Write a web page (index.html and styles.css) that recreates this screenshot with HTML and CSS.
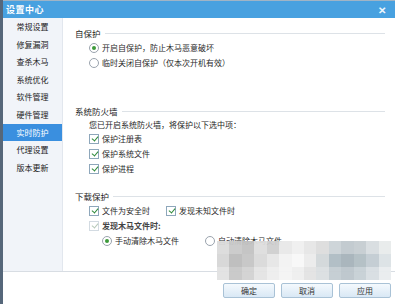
FILE: index.html
```html
<!DOCTYPE html>
<html lang="zh-CN">
<head>
    <meta charset="UTF-8">
    <title>设置中心</title>
    <link rel="stylesheet" href="styles.css">
</head>
<body>
    <div class="window">
        <div class="titlebar">
            <span class="title">设置中心</span>
            <span class="close">✕</span>
        </div>

        <div class="body">
            <ul class="sidebar">
                <li>常规设置</li>
                <li>修复漏洞</li>
                <li>查杀木马</li>
                <li>系统优化</li>
                <li>软件管理</li>
                <li>硬件管理</li>
                <li class="active">实时防护</li>
                <li>代理设置</li>
                <li>版本更新</li>
            </ul>

            <div class="content">
                <div class="group">
                    <div class="group-title"><span>自保护</span></div>
                    <label class="opt"><span class="radio on"></span>开启自保护，防止木马恶意破坏</label>
                    <label class="opt"><span class="radio"></span>临时关闭自保护（仅本次开机有效）</label>
                </div>

                <div class="group firewall">
                    <div class="group-title"><span>系统防火墙</span></div>
                    <p class="note">您已开启系统防火墙，将保护以下选中项：</p>
                    <label class="opt"><span class="check on"></span>保护注册表</label>
                    <label class="opt"><span class="check on"></span>保护系统文件</label>
                    <label class="opt"><span class="check on"></span>保护进程</label>
                </div>

                <div class="group download">
                    <div class="group-title"><span>下载保护</span></div>
                    <div class="row">
                        <label class="opt w77"><span class="check on"></span>文件为安全时</label>
                        <label class="opt"><span class="check on"></span>发现未知文件时</label>
                    </div>
                    <label class="opt"><span class="check off"></span><b class="sub">发现木马文件时:</b></label>
                    <div class="row indent">
                        <label class="opt w103"><span class="radio on"></span>手动清除木马文件</label>
                        <label class="opt"><span class="radio"></span>自动清除木马文件</label>
                    </div>
                </div>
            </div>
        </div>

        <div class="footer">
            <button class="btn">确定</button>
            <button class="btn">取消</button>
            <button class="btn">应用</button>
        </div>

        <div class="mosaic">
            <i style="background:#dcdcdc"></i><i style="background:#cacaca"></i><i style="background:#c2c2c2"></i><i style="background:#dedede"></i><i style="background:#cfcfcf"></i><i style="background:#e8e8e8"></i><i style="background:#f0f0f0"></i><i style="background:#e6e6e6"></i><i style="background:#dddddd"></i><i style="background:#ccd3d7"></i><i style="background:#c0c9ce"></i><i style="background:#c6cdd1"></i><i style="background:#d8dde0"></i><i style="background:#e8ebec"></i>
            <i style="background:#d6d6d6"></i><i style="background:#bcbcbc"></i><i style="background:#c6c6c6"></i><i style="background:#dadada"></i><i style="background:#e6e6e6"></i><i style="background:#f3f3f3"></i><i style="background:#f8f8f8"></i><i style="background:#ebebeb"></i><i style="background:#d2d7da"></i><i style="background:#aebcc4"></i><i style="background:#a6b3ba"></i><i style="background:#b2bec4"></i><i style="background:#c2ccd2"></i><i style="background:#dce2e5"></i>
            <i style="background:#e2e2e2"></i><i style="background:#c8c8c8"></i><i style="background:#d2d2d2"></i><i style="background:#e4e4e4"></i><i style="background:#eeeeee"></i><i style="background:#f4f4f4"></i><i style="background:#efefef"></i><i style="background:#e3e3e3"></i><i style="background:#dbdfe1"></i><i style="background:#c4cdd2"></i><i style="background:#bcc6cc"></i><i style="background:#c7d0d5"></i><i style="background:#d7dee2"></i><i style="background:#e9edef"></i>
        </div>
    </div>
</body>
</html>
```

FILE: styles.css
```css
* {
    margin: 0;
    padding: 0;
    box-sizing: border-box;
}

body {
    width: 395px;
    height: 304px;
    overflow: hidden;
    font-family: "Noto Sans CJK SC", "Liberation Sans", sans-serif;
    font-size: 8px;
    color: #2a2a2a;
    background: #ffffff;
}

.window {
    position: relative;
    height: 304px;
    border-left: 3px solid #56677a;
    display: flex;
    flex-direction: column;
}

.titlebar {
    height: 18px;
    background: #48a1e0;
    border-top: 1px solid #9fb4c6;
    display: flex;
    align-items: center;
    justify-content: space-between;
    padding: 0 9px 0 3px;
    color: #ffffff;
}

.title {
    font-size: 9px;
    font-weight: bold;
    letter-spacing: 0.5px;
}

.close {
    font-size: 10px;
    font-weight: bold;
    color: #eef6fc;
}

.body {
    flex: 1;
    display: flex;
    border-bottom: 1px solid #d8dde3;
}

.sidebar {
    width: 60px;
    list-style: none;
    background: #f1f4f9;
    border-right: 1px solid #e2e7ee;
}

.sidebar li {
    height: 17.6px;
    line-height: 17.6px;
    text-align: center;
    font-size: 8px;
    color: #222222;
}

.sidebar li.active {
    background: #3a8fdf;
    color: #ffffff;
}

.content {
    flex: 1;
    padding: 10px 10px 0 12px;
}

.group-title {
    display: flex;
    align-items: center;
    gap: 4px;
    height: 10px;
    line-height: 10px;
    margin-bottom: 2px;
    font-size: 8.5px;
    color: #1e1e1e;
}

.group-title::after {
    content: "";
    flex: 1;
    border-top: 1px solid #dde2e7;
}

.firewall .group-title {
    margin-bottom: 4px;
}

.opt {
    display: flex;
    align-items: center;
    height: 15px;
    padding-left: 14px;
    font-size: 8px;
    color: #2a2a2a;
}

.firewall {
    margin-top: 36px;
}

.download {
    margin-top: 15px;
}

.note {
    height: 10px;
    line-height: 10px;
    margin-bottom: 1px;
    padding-left: 14px;
    font-size: 8px;
    color: #1e1e1e;
}

.row {
    display: flex;
}

.w77 {
    width: 77px;
}

.w103 {
    width: 103px;
}

.indent {
    padding-left: 13px;
}

.indent .opt {
    padding-left: 14px;
}

.sub {
    font-weight: bold;
    color: #444444;
}

.radio {
    width: 10px;
    height: 10px;
    border: 1px solid #9aa3ad;
    border-radius: 50%;
    background: #ffffff;
    margin-right: 3px;
    display: flex;
    align-items: center;
    justify-content: center;
}

.radio.on::after {
    content: "";
    width: 4px;
    height: 4px;
    border-radius: 50%;
    background: #3d9a3a;
}

.check {
    width: 10px;
    height: 10px;
    border: 1px solid #8ea7bb;
    background: #ffffff;
    margin-right: 3px;
    position: relative;
}

.check.on::after,
.check.off::after {
    content: "";
    position: absolute;
    left: 2.5px;
    top: 0px;
    width: 3px;
    height: 5px;
    border: solid #2e8a3a;
    border-width: 0 1.5px 1.5px 0;
    transform: rotate(40deg);
}

.check.off {
    border-color: #d3dbe2;
}

.check.off::after {
    border-color: #b7c9b9;
}

.footer {
    height: 32px;
    display: flex;
    justify-content: flex-end;
    align-items: center;
    gap: 6px;
    padding: 4px 4px 0 0;
}

.btn {
    width: 52px;
    height: 15px;
    font-family: inherit;
    font-size: 8px;
    color: #333333;
    border: 1px solid #a9c2d6;
    border-radius: 2px;
    background: linear-gradient(#f4f9fd, #d9e8f5);
}

.mosaic {
    position: absolute;
    left: 214px;
    top: 241px;
    width: 174px;
    height: 39px;
    display: grid;
    grid-template-columns: repeat(14, 1fr);
    grid-template-rows: repeat(3, 1fr);
    opacity: 0.95;
}
```
